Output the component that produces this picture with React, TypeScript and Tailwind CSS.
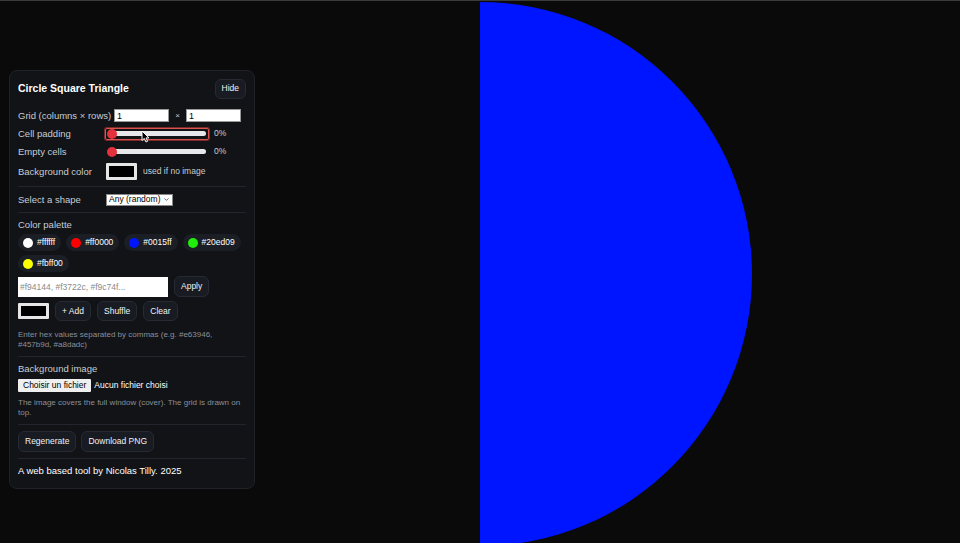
import { ChevronDown } from "lucide-react";

const palette = [
    { hex: '#ffffff' },
    { hex: '#ff0000' },
    { hex: '#0015ff' },
    { hex: '#20ed09' },
    { hex: '#fbff00' },
];

function Slider({ focused }: { focused?: boolean }) {
    return (
        <div className={`relative flex items-center w-[104px] h-[12px] rounded-[2px] ${focused ? 'border border-[#d9534f] shadow-[0_0_0_1px_#7a2a2a]' : 'border border-transparent'}`}>
            <div className="ml-[2px] mr-[2px] h-[5px] flex-1 rounded-full bg-[#e8e8ea]" />
            <div className="absolute left-[1px] top-1/2 -translate-y-1/2 w-[10px] h-[10px] rounded-full bg-[#e3323b]" />
        </div>
    );
}

function Btn({ children, className = '' }: { children: React.ReactNode; className?: string }) {
    return (
        <button className={`h-[20px] px-[6px] rounded-[6px] border border-[#262a33] bg-[#181b22] text-[8.5px] text-[#f2f2f2] leading-none ${className}`}>
            {children}
        </button>
    );
}

function Divider() {
    return <div className="h-px bg-[#22252b] my-[6px]" />;
}

function Cursor() {
    return (
        <svg className="absolute left-[36px] top-[2px]" width="9" height="13" viewBox="0 0 9 13">
            <path d="M1,1 L1,10.5 L3.3,8.4 L5,12 L6.6,11.3 L5,7.9 L8,7.9 Z" fill="#000" stroke="#fff" strokeWidth="1" strokeLinejoin="round" />
        </svg>
    );
}

export default function App() {
    return (
        <div className="relative w-[960px] h-[543px] overflow-hidden bg-[#0a0a0a] border-t border-[#3a3a3a] font-['Liberation_Sans',Arial,sans-serif]">
            <svg className="absolute inset-0" width="960" height="543" viewBox="0 0 960 543">
                <path d="M480,1 A272,272 0 0 1 480,545 Z" fill="#0015ff" />
            </svg>

            <div className="absolute left-[9px] top-[69px] w-[246px] h-[419px] rounded-[8px] border border-[#1f2227] bg-[#111317] px-[8px] pt-[8px] text-[9.5px] leading-[11px] text-[#c9ccd2]">
                <div className="flex items-center justify-between h-[19px]">
                    <h1 className="text-[10.5px] leading-[13px] font-bold text-white">Circle Square Triangle</h1>
                    <Btn className="h-[19px] px-[5px]">Hide</Btn>
                </div>

                <div className="mt-[11px] flex flex-col gap-[5px]">
                    <div className="flex items-center h-[13px]">
                        <span className="w-[96px]">Grid (columns × rows)</span>
                        <input readOnly value="1" className="w-[55px] h-[13px] bg-white text-black text-[9px] leading-[11px] px-[2px] border border-[#999] outline-none" />
                        <span className="w-[17px] text-center text-[8px]">×</span>
                        <input readOnly value="1" className="w-[55px] h-[13px] bg-white text-black text-[9px] leading-[11px] px-[2px] border border-[#999] outline-none" />
                    </div>
                    <div className="flex items-center h-[13px]">
                        <span className="w-[87px]">Cell padding</span>
                        <div className="relative">
                            <Slider focused />
                            <Cursor />
                        </div>
                        <span className="ml-[5px] text-[8.5px]">0%</span>
                    </div>
                    <div className="flex items-center h-[13px]">
                        <span className="w-[87px]">Empty cells</span>
                        <Slider />
                        <span className="ml-[5px] text-[8.5px]">0%</span>
                    </div>
                    <div className="flex items-center h-[17px]">
                        <span className="w-[88px]">Background color</span>
                        <div className="w-[31px] h-[17px] border-[3px] border-[#e6e6e6] bg-black rounded-[1px]" />
                        <span className="ml-[6px] text-[8.5px]">used if no image</span>
                    </div>
                </div>

                <Divider />

                <div className="flex items-center h-[13px]">
                    <span className="w-[88px]">Select a shape</span>
                    <div className="flex items-center gap-[2px] h-[12px] bg-white text-black text-[8.5px] px-[2px] border border-[#888]">
                        Any (random)
                        <ChevronDown className="w-[7px] h-[7px]" strokeWidth={2} />
                    </div>
                </div>

                <Divider />

                <div className="h-[11px]">Color palette</div>
                <div className="mt-[4px] flex flex-wrap gap-x-[5px] gap-y-[4px]">
                    {palette.map((c) => (
                        <div key={c.hex} className="flex items-center gap-[4px] h-[17px] pl-[5px] pr-[6px] rounded-full bg-[#1b1e25] text-[8.5px] text-white">
                            <span className="w-[10px] h-[10px] rounded-full" style={{ backgroundColor: c.hex }} />
                            {c.hex}
                        </div>
                    ))}
                </div>

                <div className="mt-[4px] flex items-center gap-[6px] h-[21px]">
                    <input readOnly placeholder="#f94144, #f3722c, #f9c74f..." className="w-[150px] h-[20px] bg-white text-black text-[8.5px] px-[2px] placeholder:text-[#8a8a8a] outline-none" />
                    <Btn className="h-[21px]">Apply</Btn>
                </div>

                <div className="mt-[4px] flex items-center gap-[6px] h-[20px]">
                    <div className="w-[31px] h-[16px] border-[3px] border-[#e6e6e6] bg-black rounded-[1px]" />
                    <Btn>+ Add</Btn>
                    <Btn>Shuffle</Btn>
                    <Btn>Clear</Btn>
                </div>

                <p className="mt-[9px] text-[8px] leading-[10px] text-[#8b8f97]">
                    Enter hex values separated by commas (e.g. #e63946, #457b9d, #a8dadc)
                </p>

                <Divider />

                <div className="h-[11px]">Background image</div>
                <div className="mt-[5px] h-[13px] flex items-center gap-[3px] text-[8.5px] text-white">
                    <span className="h-[13px] px-[5px] flex items-center bg-[#efefef] text-black rounded-[1px]">Choisir un fichier</span>
                    Aucun fichier choisi
                </div>
                <p className="mt-[6px] text-[8px] leading-[10px] text-[#8b8f97]">
                    The image covers the full window (cover). The grid is drawn on top.
                </p>

                <Divider />

                <div className="flex items-center gap-[5px] h-[21px]">
                    <Btn className="h-[21px]">Regenerate</Btn>
                    <Btn className="h-[21px]">Download PNG</Btn>
                </div>

                <Divider />

                <div className="h-[11px] text-[9.5px] text-white">A web based tool by Nicolas Tilly. 2025</div>
            </div>
        </div>
    );
}
